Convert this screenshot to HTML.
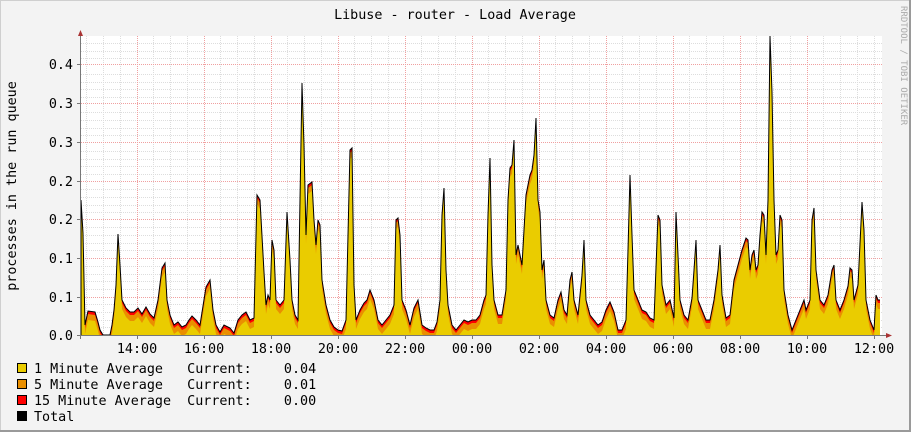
<!DOCTYPE html>
<html><head><style>
html,body{margin:0;padding:0;background:#f3f3f3;}
svg{display:block;}
text{font-family:"DejaVu Sans Mono","Liberation Mono",monospace;}
</style></head><body>
<svg width="911" height="432" xmlns="http://www.w3.org/2000/svg">
<defs>
<clipPath id="cp"><rect x="81" y="36" width="801" height="299"/></clipPath>
</defs>
<rect x="0" y="0" width="911" height="432" fill="#f3f3f3"/>
<rect x="0.5" y="0.5" width="910" height="431" fill="none" stroke="#cfcfcf"/>
<line x1="0" y1="431" x2="911" y2="431" stroke="#9a9a9a" stroke-width="2"/>
<line x1="910" y1="0" x2="910" y2="432" stroke="#9a9a9a" stroke-width="2"/>
<rect x="81" y="36" width="801" height="299" fill="#fff"/>
<g stroke="#ddd" stroke-dasharray="1,1">
<path d="M81 43.5H882M81 51.5H882M81 58.5H882M81 74.5H882M81 82.5H882M81 89.5H882M81 97.5H882M81 112.5H882M81 120.5H882M81 128.5H882M81 135.5H882M81 151.5H882M81 159.5H882M81 166.5H882M81 174.5H882M81 189.5H882M81 197.5H882M81 205.5H882M81 212.5H882M81 227.5H882M81 235.5H882M81 243.5H882M81 250.5H882M81 266.5H882M81 274.5H882M81 281.5H882M81 289.5H882M81 304.5H882M81 312.5H882M81 320.5H882M81 327.5H882"/>
<path d="M86.5 36V335M103.5 36V335M120.5 36V335M153.5 36V335M170.5 36V335M187.5 36V335M220.5 36V335M237.5 36V335M254.5 36V335M287.5 36V335M304.5 36V335M321.5 36V335M354.5 36V335M371.5 36V335M388.5 36V335M421.5 36V335M438.5 36V335M455.5 36V335M488.5 36V335M505.5 36V335M522.5 36V335M555.5 36V335M572.5 36V335M589.5 36V335M622.5 36V335M639.5 36V335M656.5 36V335M689.5 36V335M706.5 36V335M723.5 36V335M756.5 36V335M773.5 36V335M790.5 36V335M823.5 36V335M840.5 36V335M857.5 36V335M874.5 36V335"/>
</g>
<g stroke="#f0a0a0" stroke-dasharray="1,1">
<path d="M81 64.5H882M81 103.5H882M81 142.5H882M81 181.5H882M81 219.5H882M81 258.5H882M81 297.5H882"/>
<path d="M137.5 36V335M204.5 36V335M271.5 36V335M338.5 36V335M405.5 36V335M472.5 36V335M539.5 36V335M606.5 36V335M673.5 36V335M740.5 36V335M807.5 36V335"/>
</g>
<g clip-path="url(#cp)">
<path d="M81 340L81 200L83 233L85 325L88 311L95 312L98 322L100 330L103 335L110 335L112 325L114 310L116 285L118 234L120 265L122 300L126 308L130 312L134 312L138 308L142 314L146 307L150 314L154 318L158 300L162 268L165 263L167 300L170 315L174 325L178 322L182 327L186 325L189 320L192 316L196 320L200 325L206 287L210 280L213 310L216 325L220 332L224 325L230 328L234 333L238 320L242 315L246 312L250 320L254 318L257 195L260 200L264 272L266 305L268 295L270 300L272 240L274 250L276 300L280 305L284 300L287 212L290 260L292 300L295 315L298 320L300 200L302 83L304 145L306 235L308 185L312 182L314 220L316 245L318 220L320 225L322 280L326 305L330 320L334 327L338 330L342 331L346 320L350 150L352 148L354 285L356 320L360 310L364 303L367 300L370 290L374 300L378 320L382 325L386 320L390 315L394 305L396 220L398 218L400 235L402 300L406 310L410 325L414 308L418 300L422 325L426 328L430 330L434 330L437 322L440 300L442 215L444 188L446 270L448 305L452 325L456 330L460 325L464 320L468 322L472 320L476 320L480 315L484 300L486 295L488 215L490 158L492 265L494 300L498 315L502 315L506 290L508 200L510 168L512 165L514 140L516 255L518 245L522 265L526 195L528 185L530 175L532 170L534 155L536 118L538 200L540 212L542 270L544 260L546 300L550 315L554 318L558 300L561 292L564 310L567 315L570 280L572 272L574 300L578 315L582 275L584 240L586 300L590 315L594 320L598 325L602 322L606 310L610 302L614 312L618 330L622 330L626 320L628 250L630 175L632 235L634 290L638 300L642 310L646 312L650 318L654 320L658 215L660 220L662 285L666 305L670 300L674 318L676 212L678 255L680 300L684 315L688 320L692 298L694 270L696 240L698 300L702 310L706 320L710 320L714 300L718 270L720 245L722 295L726 318L730 315L734 280L738 265L742 250L746 238L748 240L750 270L752 255L754 250L756 270L758 265L760 235L762 212L764 215L766 255L768 200L770 36L772 92L774 200L776 255L778 250L780 215L782 220L784 290L788 315L792 330L796 320L800 310L804 300L806 310L810 300L812 220L814 208L816 270L820 300L824 305L828 295L832 270L834 265L836 300L840 310L844 300L848 286L850 268L852 270L854 300L858 285L862 202L864 230L866 300L870 320L874 330L876 295L878 300L880 300L880 340Z" fill="#ff0000"/>
<path transform="translate(0,3)" d="M81 340L81 200L83 233L85 325L88 311L95 312L98 322L100 330L103 335L110 335L112 325L114 310L116 285L118 234L120 265L122 300L126 308L130 312L134 312L138 308L142 314L146 307L150 314L154 318L158 300L162 268L165 263L167 300L170 315L174 325L178 322L182 327L186 325L189 320L192 316L196 320L200 325L206 287L210 280L213 310L216 325L220 332L224 325L230 328L234 333L238 320L242 315L246 312L250 320L254 318L257 195L260 200L264 272L266 305L268 295L270 300L272 240L274 250L276 300L280 305L284 300L287 212L290 260L292 300L295 315L298 320L300 200L302 83L304 145L306 235L308 185L312 182L314 220L316 245L318 220L320 225L322 280L326 305L330 320L334 327L338 330L342 331L346 320L350 150L352 148L354 285L356 320L360 310L364 303L367 300L370 290L374 300L378 320L382 325L386 320L390 315L394 305L396 220L398 218L400 235L402 300L406 310L410 325L414 308L418 300L422 325L426 328L430 330L434 330L437 322L440 300L442 215L444 188L446 270L448 305L452 325L456 330L460 325L464 320L468 322L472 320L476 320L480 315L484 300L486 295L488 215L490 158L492 265L494 300L498 315L502 315L506 290L508 200L510 168L512 165L514 140L516 255L518 245L522 265L526 195L528 185L530 175L532 170L534 155L536 118L538 200L540 212L542 270L544 260L546 300L550 315L554 318L558 300L561 292L564 310L567 315L570 280L572 272L574 300L578 315L582 275L584 240L586 300L590 315L594 320L598 325L602 322L606 310L610 302L614 312L618 330L622 330L626 320L628 250L630 175L632 235L634 290L638 300L642 310L646 312L650 318L654 320L658 215L660 220L662 285L666 305L670 300L674 318L676 212L678 255L680 300L684 315L688 320L692 298L694 270L696 240L698 300L702 310L706 320L710 320L714 300L718 270L720 245L722 295L726 318L730 315L734 280L738 265L742 250L746 238L748 240L750 270L752 255L754 250L756 270L758 265L760 235L762 212L764 215L766 255L768 200L770 36L772 92L774 200L776 255L778 250L780 215L782 220L784 290L788 315L792 330L796 320L800 310L804 300L806 310L810 300L812 220L814 208L816 270L820 300L824 305L828 295L832 270L834 265L836 300L840 310L844 300L848 286L850 268L852 270L854 300L858 285L862 202L864 230L866 300L870 320L874 330L876 295L878 300L880 300L880 340Z" fill="#ea8f00"/>
<path transform="translate(0,9)" d="M81 340L81 200L83 233L85 325L88 311L95 312L98 322L100 330L103 335L110 335L112 325L114 310L116 285L118 234L120 265L122 300L126 308L130 312L134 312L138 308L142 314L146 307L150 314L154 318L158 300L162 268L165 263L167 300L170 315L174 325L178 322L182 327L186 325L189 320L192 316L196 320L200 325L206 287L210 280L213 310L216 325L220 332L224 325L230 328L234 333L238 320L242 315L246 312L250 320L254 318L257 195L260 200L264 272L266 305L268 295L270 300L272 240L274 250L276 300L280 305L284 300L287 212L290 260L292 300L295 315L298 320L300 200L302 83L304 145L306 235L308 185L312 182L314 220L316 245L318 220L320 225L322 280L326 305L330 320L334 327L338 330L342 331L346 320L350 150L352 148L354 285L356 320L360 310L364 303L367 300L370 290L374 300L378 320L382 325L386 320L390 315L394 305L396 220L398 218L400 235L402 300L406 310L410 325L414 308L418 300L422 325L426 328L430 330L434 330L437 322L440 300L442 215L444 188L446 270L448 305L452 325L456 330L460 325L464 320L468 322L472 320L476 320L480 315L484 300L486 295L488 215L490 158L492 265L494 300L498 315L502 315L506 290L508 200L510 168L512 165L514 140L516 255L518 245L522 265L526 195L528 185L530 175L532 170L534 155L536 118L538 200L540 212L542 270L544 260L546 300L550 315L554 318L558 300L561 292L564 310L567 315L570 280L572 272L574 300L578 315L582 275L584 240L586 300L590 315L594 320L598 325L602 322L606 310L610 302L614 312L618 330L622 330L626 320L628 250L630 175L632 235L634 290L638 300L642 310L646 312L650 318L654 320L658 215L660 220L662 285L666 305L670 300L674 318L676 212L678 255L680 300L684 315L688 320L692 298L694 270L696 240L698 300L702 310L706 320L710 320L714 300L718 270L720 245L722 295L726 318L730 315L734 280L738 265L742 250L746 238L748 240L750 270L752 255L754 250L756 270L758 265L760 235L762 212L764 215L766 255L768 200L770 36L772 92L774 200L776 255L778 250L780 215L782 220L784 290L788 315L792 330L796 320L800 310L804 300L806 310L810 300L812 220L814 208L816 270L820 300L824 305L828 295L832 270L834 265L836 300L840 310L844 300L848 286L850 268L852 270L854 300L858 285L862 202L864 230L866 300L870 320L874 330L876 295L878 300L880 300L880 340Z" fill="#eacc00"/>
<path d="M81 335L81 200L83 233L85 325L88 311L95 312L98 322L100 330L103 335L110 335L112 325L114 310L116 285L118 234L120 265L122 300L126 308L130 312L134 312L138 308L142 314L146 307L150 314L154 318L158 300L162 268L165 263L167 300L170 315L174 325L178 322L182 327L186 325L189 320L192 316L196 320L200 325L206 287L210 280L213 310L216 325L220 332L224 325L230 328L234 333L238 320L242 315L246 312L250 320L254 318L257 195L260 200L264 272L266 305L268 295L270 300L272 240L274 250L276 300L280 305L284 300L287 212L290 260L292 300L295 315L298 320L300 200L302 83L304 145L306 235L308 185L312 182L314 220L316 245L318 220L320 225L322 280L326 305L330 320L334 327L338 330L342 331L346 320L350 150L352 148L354 285L356 320L360 310L364 303L367 300L370 290L374 300L378 320L382 325L386 320L390 315L394 305L396 220L398 218L400 235L402 300L406 310L410 325L414 308L418 300L422 325L426 328L430 330L434 330L437 322L440 300L442 215L444 188L446 270L448 305L452 325L456 330L460 325L464 320L468 322L472 320L476 320L480 315L484 300L486 295L488 215L490 158L492 265L494 300L498 315L502 315L506 290L508 200L510 168L512 165L514 140L516 255L518 245L522 265L526 195L528 185L530 175L532 170L534 155L536 118L538 200L540 212L542 270L544 260L546 300L550 315L554 318L558 300L561 292L564 310L567 315L570 280L572 272L574 300L578 315L582 275L584 240L586 300L590 315L594 320L598 325L602 322L606 310L610 302L614 312L618 330L622 330L626 320L628 250L630 175L632 235L634 290L638 300L642 310L646 312L650 318L654 320L658 215L660 220L662 285L666 305L670 300L674 318L676 212L678 255L680 300L684 315L688 320L692 298L694 270L696 240L698 300L702 310L706 320L710 320L714 300L718 270L720 245L722 295L726 318L730 315L734 280L738 265L742 250L746 238L748 240L750 270L752 255L754 250L756 270L758 265L760 235L762 212L764 215L766 255L768 200L770 36L772 92L774 200L776 255L778 250L780 215L782 220L784 290L788 315L792 330L796 320L800 310L804 300L806 310L810 300L812 220L814 208L816 270L820 300L824 305L828 295L832 270L834 265L836 300L840 310L844 300L848 286L850 268L852 270L854 300L858 285L862 202L864 230L866 300L870 320L874 330L876 295L878 300L880 300" fill="none" stroke="#000" stroke-width="1"/>
</g>
<line x1="80.5" y1="33" x2="80.5" y2="339" stroke="#777"/>
<line x1="77" y1="335.5" x2="886" y2="335.5" stroke="#777"/>
<path d="M78 36L80.5 30L83 36Z" fill="#a33"/>
<path d="M886 333L892 335.5L886 338Z" fill="#a33"/>
<g stroke="#777"><path d="M137.5 335V339M204.5 335V339M271.5 335V339M338.5 335V339M405.5 335V339M472.5 335V339M539.5 335V339M606.5 335V339M673.5 335V339M740.5 335V339M807.5 335V339M874.5 335V339M77 64.5H81M77 103.5H81M77 142.5H81M77 181.5H81M77 219.5H81M77 258.5H81M77 297.5H81"/></g>
<text x="455" y="19" font-size="13.4" text-anchor="middle" fill="#000">Libuse - router - Load Average</text>
<g font-size="13.4" fill="#000" text-anchor="end">
<text x="73" y="69">0.4</text><text x="73" y="108">0.3</text><text x="73" y="147">0.3</text><text x="73" y="186">0.2</text><text x="73" y="224">0.2</text><text x="73" y="263">0.1</text><text x="73" y="302">0.1</text><text x="73" y="340">0.0</text>
</g>
<g font-size="13.4" fill="#000" text-anchor="middle">
<text x="137" y="353">14:00</text><text x="204" y="353">16:00</text><text x="271" y="353">18:00</text><text x="338" y="353">20:00</text><text x="405" y="353">22:00</text><text x="472" y="353">00:00</text><text x="539" y="353">02:00</text><text x="606" y="353">04:00</text><text x="673" y="353">06:00</text><text x="740" y="353">08:00</text><text x="807" y="353">10:00</text><text x="874" y="353">12:00</text>
</g>
<text transform="translate(16,186) rotate(-90)" font-size="13.4" text-anchor="middle" fill="#000">processes in the run queue</text>
<text transform="translate(901,6) rotate(90)" font-size="9" fill="#aaa">RRDTOOL / TOBI OETIKER</text>
<g stroke="#000" stroke-width="1">
<rect x="17.5" y="363.5" width="9" height="9" fill="#eacc00"/>
<rect x="17.5" y="379.5" width="9" height="9" fill="#ea8f00"/>
<rect x="17.5" y="395.5" width="9" height="9" fill="#ff0000"/>
<rect x="17.5" y="411.5" width="9" height="9" fill="#000"/>
</g>
<g font-size="13.4" fill="#000">
<text x="34" y="373" xml:space="preserve">1 Minute Average   Current:    0.04</text>
<text x="34" y="389" xml:space="preserve">5 Minute Average   Current:    0.01</text>
<text x="34" y="405" xml:space="preserve">15 Minute Average  Current:    0.00</text>
<text x="34" y="421">Total</text>
</g>
</svg>
</body></html>
